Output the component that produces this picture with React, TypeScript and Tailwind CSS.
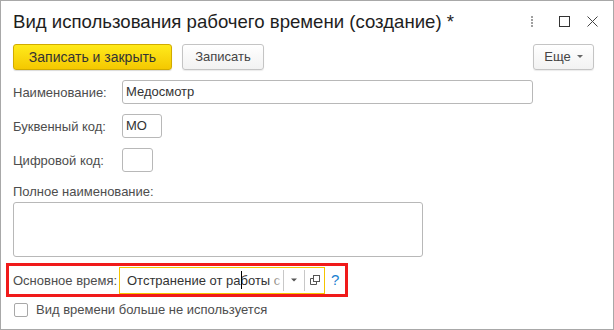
import React from "react"

function WindowIcons() {
  return (
    <div className="flex items-center">
      <div className="flex flex-col gap-[1px]">
        <span className="block h-[2px] w-[2px] bg-[#a0a0a0]" />
        <span className="block h-[2px] w-[2px] bg-[#a0a0a0]" />
        <span className="block h-[2px] w-[2px] bg-[#a0a0a0]" />
        <span className="block h-[2px] w-[2px] bg-[#a0a0a0]" />
      </div>
      <div className="ml-[26px] h-[11px] w-[11px] border border-[#333]" />
      <svg width="11" height="11" viewBox="0 0 11 11" className="ml-[17px]">
        <path d="M0.5 0.5 L10.5 10.5 M10.5 0.5 L0.5 10.5" stroke="#444" strokeWidth="1" fill="none" />
      </svg>
    </div>
  )
}

function OpenIcon() {
  return (
    <svg width="10" height="10" viewBox="0 0 10 10">
      <rect x="3.5" y="0.5" width="6" height="6" stroke="#555" fill="none" />
      <path d="M3.5 3.5 H0.5 V9.5 H6.5 V6.5" stroke="#555" fill="none" />
    </svg>
  )
}

export default function App() {
  const label = "text-[13px] text-[#4d4d4d] leading-[15px]"
  const field = "h-[24px] rounded-[3px] border border-[#b8b8b8] bg-white"

  return (
    <div className="h-[330px] w-[614px] overflow-hidden border border-[#a8a8a8] bg-white font-['Liberation_Sans',Arial,sans-serif]">
      {/* header */}
      <div className="flex items-center justify-between pl-[12px] pr-[15px] pt-[10px]">
        <h1 className="text-[18.6px] leading-[21px] text-[#1e1e1e]">
          Вид использования рабочего времени (создание) *
        </h1>
        <WindowIcons />
      </div>

      {/* command bar */}
      <div className="mt-[12px] flex items-center pl-[12px] pr-[19px]">
        <button className="h-[26px] w-[159px] rounded-[3px] border border-[#d1ab00] bg-gradient-to-b from-[#ffea1a] to-[#f4c800] text-[14px] text-[#333] shadow-[0_1px_1px_rgba(0,0,0,0.15)]">
          Записать и закрыть
        </button>
        <button className="ml-[10px] h-[26px] w-[82px] rounded-[3px] border border-[#c4c4c4] bg-gradient-to-b from-white to-[#f2f2f2] text-[13px] text-[#444] shadow-[0_1px_1px_rgba(0,0,0,0.08)]">
          Записать
        </button>
        <button className="ml-auto flex h-[26px] w-[61px] items-center justify-center gap-[6px] rounded-[3px] border border-[#c4c4c4] bg-gradient-to-b from-white to-[#f2f2f2] text-[13px] text-[#444] shadow-[0_1px_1px_rgba(0,0,0,0.08)]">
          Еще
          <svg width="6" height="4" viewBox="0 0 6 4">
            <path d="M0 0 H6 L3 3 Z" fill="#666" />
          </svg>
        </button>
      </div>

      {/* fields */}
      <div className="mt-[10px] flex flex-col pl-[12px]">
        <div className="flex items-center">
          <div className={`${label} w-[109px]`}>Наименование:</div>
          <div className={`${field} flex w-[411px] items-center px-[3px] text-[13px] text-[#333]`}>Медосмотр</div>
        </div>
        <div className="mt-[10px] flex items-center">
          <div className={`${label} w-[109px]`}>Буквенный код:</div>
          <div className={`${field} flex w-[40px] items-center px-[3px] text-[13px] text-[#333]`}>МО</div>
        </div>
        <div className="mt-[10px] flex items-center">
          <div className={`${label} w-[109px]`}>Цифровой код:</div>
          <div className={`${field} w-[31px]`} />
        </div>

        <div className={`${label} mt-[12px]`}>Полное наименование:</div>
        <div className="mt-[3px] h-[55px] w-[410px] rounded-[3px] border border-[#b8b8b8]" />

        {/* highlighted row */}
        <div className="ml-[-7px] mt-[6px] flex h-[34px] w-[342px] items-center border-[3px] border-[#f01a1a] pl-[4px]">
          <div className={`${label} w-[106px] shrink-0`}>Основное время:</div>
          <div className="flex h-[27px] w-[206px] shrink-0 items-center border border-[#f5c400] bg-white">
            <div className="relative h-full w-[163px] overflow-hidden whitespace-nowrap pl-[7px] text-[13px] leading-[25px] text-[#333]">
              Отстранение от ра
              <span className="relative">
                <span className="absolute left-0 top-[-2px] h-[18px] w-px bg-black" />
              </span>
              боты с о
              <div className="absolute right-0 top-0 h-full w-[14px] bg-gradient-to-r from-transparent to-white" />
            </div>
            <div className="h-[21px] w-px bg-[#c8c8c8]" />
            <div className="flex w-[20px] items-center justify-center">
              <svg width="6" height="4" viewBox="0 0 6 4">
                <path d="M0 0.5 H6 L3 3.5 Z" fill="#555" />
              </svg>
            </div>
            <div className="h-[21px] w-px bg-[#c8c8c8]" />
            <div className="flex flex-1 items-center justify-center">
              <OpenIcon />
            </div>
          </div>
          <span className="ml-[6px] shrink-0 text-[15px] leading-[18px] text-[#1a7fd0]">?</span>
        </div>

        {/* checkbox */}
        <div className="mt-[5px] flex items-center">
          <div className="ml-[1px] h-[14px] w-[14px] rounded-[2px] border border-[#a8a8a8] bg-white" />
          <span className={`${label} ml-[8px]`}>Вид времени больше не используется</span>
        </div>
      </div>
    </div>
  )
}
